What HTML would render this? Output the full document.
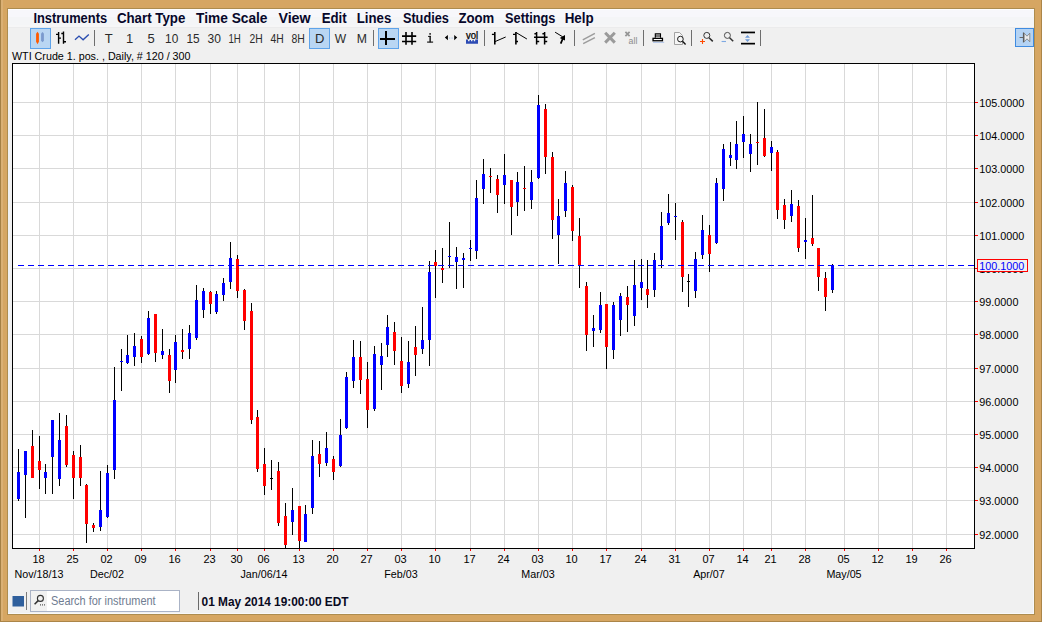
<!DOCTYPE html>
<html><head><meta charset="utf-8"><title>WTI Crude chart</title>
<style>html,body{margin:0;padding:0;background:#d6a662;}body{width:1042px;height:622px;overflow:hidden;font-family:"Liberation Sans",sans-serif;}svg{display:block}text{font-family:"Liberation Sans",sans-serif}</style>
</head><body>
<svg width="1042" height="622" viewBox="0 0 1042 622">
<rect x="0" y="0" width="1042" height="622" fill="#d6a662"/>
<g shape-rendering="crispEdges"><rect x="0" y="0" width="1" height="622" fill="#a58044"/><rect x="1" y="0" width="2" height="622" fill="#dab074"/><rect x="1041" y="0" width="1" height="622" fill="#ab8548"/><rect x="0" y="621" width="1042" height="1" fill="#ab8548"/><rect x="7" y="8" width="1028" height="607" fill="#ad8c4e"/></g>
<rect x="8" y="9" width="1026" height="605" fill="#f0f0f0"/>
<defs><linearGradient id="mb" x1="0" y1="0" x2="0" y2="1"><stop offset="0" stop-color="#fafbfc"/><stop offset="0.8" stop-color="#f4f5f7"/><stop offset="1" stop-color="#eeeeef"/></linearGradient></defs>
<g shape-rendering="crispEdges"><rect x="8" y="9" width="1026" height="1" fill="#ffffff"/><rect x="8" y="10" width="1026" height="7" fill="#f7f7fb"/><rect x="8" y="17" width="1026" height="8" fill="#f4f5f7"/><rect x="8" y="25" width="1026" height="2" fill="#f6f6f7"/><rect x="8" y="27" width="1026" height="1" fill="#ebebec"/><rect x="1033" y="28" width="1" height="586" fill="#f8f8fa"/><rect x="8" y="613" width="1026" height="1" fill="#f8f8fa"/></g>
<g font-size="14" font-weight="bold" fill="#07072a">
<text x="33.4" y="23" textLength="73.7" lengthAdjust="spacingAndGlyphs">Instruments</text>
<text x="116.9" y="23" textLength="68.5" lengthAdjust="spacingAndGlyphs">Chart Type</text>
<text x="196.1" y="23" textLength="71.4" lengthAdjust="spacingAndGlyphs">Time Scale</text>
<text x="278.4" y="23" textLength="32.2" lengthAdjust="spacingAndGlyphs">View</text>
<text x="321.7" y="23" textLength="25.0" lengthAdjust="spacingAndGlyphs">Edit</text>
<text x="356.8" y="23" textLength="34.5" lengthAdjust="spacingAndGlyphs">Lines</text>
<text x="402.9" y="23" textLength="46.0" lengthAdjust="spacingAndGlyphs">Studies</text>
<text x="458.4" y="23" textLength="35.7" lengthAdjust="spacingAndGlyphs">Zoom</text>
<text x="505.1" y="23" textLength="50.3" lengthAdjust="spacingAndGlyphs">Settings</text>
<text x="564.7" y="23" textLength="29.0" lengthAdjust="spacingAndGlyphs">Help</text>
</g>
<rect x="30.5" y="28.5" width="20" height="20" fill="#b9d6f3" stroke="#5ea3ea" stroke-width="1" shape-rendering="crispEdges"/>
<rect x="309.5" y="28.5" width="20" height="20" fill="#b9d6f3" stroke="#5ea3ea" stroke-width="1" shape-rendering="crispEdges"/>
<rect x="378.5" y="28.5" width="20" height="20" fill="#b9d6f3" stroke="#5ea3ea" stroke-width="1" shape-rendering="crispEdges"/>
<rect x="1015.5" y="28.5" width="18" height="18" fill="#b4d3f4" stroke="#3f8be0" stroke-width="1" shape-rendering="crispEdges"/>
<path d="M37.5 31.8 L38.9 33.8 L38.9 41.8 L37.5 44.2 L36.1 41.8 L36.1 33.8 Z" fill="#ff5a00"/>
<path d="M42.5 32 L43.9 33.4 L43.9 40.8 L42.5 42.2 L41.1 40.8 L41.1 33.4 Z" fill="#7b9ace"/>
<g stroke="#000" stroke-width="1.4" fill="none"><path d="M58.6 31.9V43.8M56 34.4H58.6M58.6 38.1H61M63.5 31.4V43.8M61.3 33.5H63.5M63.5 41.8H66"/></g>
<path d="M75 39.8 L79 36.1 L83.1 39.8 L88.8 34.4" stroke="#2a4db0" stroke-width="1.4" fill="none"/>
<rect x="94" y="30" width="1" height="16" fill="#6e6e6e" shape-rendering="crispEdges"/>
<rect x="373" y="30" width="1" height="16" fill="#6e6e6e" shape-rendering="crispEdges"/>
<rect x="484" y="30" width="1" height="16" fill="#6e6e6e" shape-rendering="crispEdges"/>
<rect x="574" y="30" width="1" height="16" fill="#6e6e6e" shape-rendering="crispEdges"/>
<rect x="643" y="30" width="1" height="16" fill="#6e6e6e" shape-rendering="crispEdges"/>
<rect x="691" y="30" width="1" height="16" fill="#6e6e6e" shape-rendering="crispEdges"/>
<rect x="760" y="30" width="1" height="16" fill="#6e6e6e" shape-rendering="crispEdges"/>
<g font-size="13" fill="#2a2a2a" text-anchor="middle">
<text x="108.7" y="42.5">T</text>
<text x="129.6" y="42.5">1</text>
<text x="151.2" y="42.5">5</text>
<text x="171.7" y="42.5" textLength="13.2" lengthAdjust="spacingAndGlyphs">10</text>
<text x="193.0" y="42.5" textLength="13.2" lengthAdjust="spacingAndGlyphs">15</text>
<text x="214.2" y="42.5" textLength="13.4" lengthAdjust="spacingAndGlyphs">30</text>
<text x="234.6" y="42.5" textLength="12.4" lengthAdjust="spacingAndGlyphs">1H</text>
<text x="256.2" y="42.5" textLength="13.2" lengthAdjust="spacingAndGlyphs">2H</text>
<text x="277.0" y="42.5" textLength="13.2" lengthAdjust="spacingAndGlyphs">4H</text>
<text x="298.1" y="42.5" textLength="13.4" lengthAdjust="spacingAndGlyphs">8H</text>
<text x="319.7" y="42.5">D</text>
<text x="340.4" y="42.5" textLength="11.4" lengthAdjust="spacingAndGlyphs">W</text>
<text x="361.9" y="42.5" textLength="10.2" lengthAdjust="spacingAndGlyphs">M</text>
</g>
<g fill="#000" shape-rendering="crispEdges"><rect x="385" y="31" width="2" height="14"/><rect x="380" y="38" width="15" height="2"/></g>
<g stroke="#000" stroke-width="1.6" fill="none"><path d="M406 32V44.7M412 32V44.7M402 36.1H416.2M402 41.5H416.2"/></g>
<g fill="#1c1c1c"><rect x="429.3" y="33.1" width="1.6" height="1.6"/><rect x="428.1" y="35.9" width="2.8" height="1.1"/><rect x="429.4" y="35.9" width="1.5" height="6.4"/><rect x="427.1" y="41.5" width="6" height="1.2"/></g>
<path d="M444.8 37.6 L447.9 35 L447.9 40.2 Z M457.2 37.6 L454.2 35 L454.2 40.2 Z" fill="#000"/>
<g fill="#a9c4ea"><rect x="449.2" y="37.4" width="1" height="1.4"/><rect x="451.6" y="37.4" width="1" height="1.4"/></g>
<text x="466" y="38.8" font-size="10" fill="#000" stroke="#000" stroke-width="0.25" textLength="12.2" lengthAdjust="spacingAndGlyphs">vol</text>
<path d="M466 43.8V39.6H468V41.2H469.6V39.9H471V41.2H472.4V39.9H473.8V41.2H475.2V39.6H478V43.8Z" fill="#2c4bb4"/>
<g stroke="#000" fill="none"><path d="M494.8 32V44.6" stroke-width="1.6"/><path d="M491.9 34.4H494.8" stroke-width="1.3"/><path d="M495 41.6L505.7 37" stroke-width="1"/></g>
<g stroke="#000" fill="none"><path d="M515.9 32V44.6" stroke-width="1.6"/><path d="M513 34.4H515.9M515.9 41.5H518" stroke-width="1.3"/><path d="M516 32.5L526.9 39" stroke-width="1"/></g>
<g stroke="#000" stroke-width="1.5" fill="none"><path d="M536.6 32V44.6M544.6 32V44.6M534 37.2H547.6M536.6 41.5H539.2M544.6 41.5H547.2M534.4 33.8H536.6M542.4 33.8H544.6"/></g>
<path d="M555.1 32.2L562.7 36.8" stroke="#000" stroke-width="1" fill="none"/><path d="M565 35L565 40.6L563.3 39.7L561.5 43.9L559.9 43.2L561.7 39L559.8 38Z" fill="#000"/>
<g stroke="#9c9c9c" stroke-width="1.5" fill="none"><path d="M582.8 39.8L594.9 33.3M583.2 43.7L594.9 37.7"/></g>
<path d="M605.2 32.8L614.8 42.6M614.8 32.8L605.2 42.6" stroke="#9a9a9a" stroke-width="3" fill="none"/>
<path d="M625.4 31.9L629.6 36.2M629.6 31.9L625.4 36.2" stroke="#949494" stroke-width="1.7" fill="none"/>
<text x="628.6" y="43.6" font-size="9" fill="#8c8c8c" textLength="8.8" lengthAdjust="spacingAndGlyphs">all</text>
<g><rect x="653.05" y="38.35" width="9.4" height="2.4" fill="#ffffff" stroke="#000" stroke-width="1.3"/><path d="M655.3 37.8V33.9H660.5V37.8M655.3 36H660.5" fill="none" stroke="#000" stroke-width="1.1"/><rect x="653" y="41.9" width="11.2" height="0.9" fill="#a9bfe6"/></g>
<g fill="none"><path d="M674.5 32.5H679.5L682.5 35.5V44.5H674.5Z" stroke="#9a9a9a" stroke-width="0.9" fill="#f6f6f6"/><circle cx="680.4" cy="39.1" r="2.85" stroke="#111" stroke-width="0.95" fill="#f6f6f6"/><path d="M682.5 41.3L685.6 44.6" stroke="#111" stroke-width="1.4"/></g>
<g fill="none"><circle cx="706.8" cy="35.4" r="3" stroke="#2a2a2a" stroke-width="0.95"/><path d="M709 37.7L712.8 41.4" stroke="#2a2a2a" stroke-width="1.5"/><path d="M700 41.5H705M702.5 39V44" stroke="#ff4a00" stroke-width="1.1"/></g>
<g fill="none"><circle cx="727.4" cy="35.4" r="3" stroke="#444" stroke-width="0.95"/><path d="M729.6 37.7L733.2 41.3" stroke="#333" stroke-width="1.5"/><path d="M721.6 41.5H726" stroke="#7ea9e2" stroke-width="1.1"/></g>
<g><rect x="741" y="31.6" width="14" height="1.7" fill="#000"/><rect x="741" y="42.8" width="14" height="1.7" fill="#000"/><path d="M747.5 35L750 37.7H745Z M747.5 42L750 39.3H745Z" fill="#6f9bd8"/></g>
<g><path d="M1019.6 37.5H1023" stroke="#666" stroke-width="1"/><path d="M1023.5 32.5V42.4" stroke="#555" stroke-width="1.2"/><path d="M1024.2 33.2L1027 36.2L1029.8 33.2V41.8L1027 38.8L1024.2 41.8Z" fill="#ececec" stroke="#7a7a7a" stroke-width="0.8"/></g>
<g shape-rendering="crispEdges">
<rect x="12" y="63" width="963" height="486" fill="#ffffff"/>
<rect x="39" y="64" width="1" height="484" fill="#d9d9d9"/>
<rect x="73" y="64" width="1" height="484" fill="#d9d9d9"/>
<rect x="107" y="64" width="1" height="484" fill="#d9d9d9"/>
<rect x="141" y="64" width="1" height="484" fill="#d9d9d9"/>
<rect x="175" y="64" width="1" height="484" fill="#d9d9d9"/>
<rect x="210" y="64" width="1" height="484" fill="#d9d9d9"/>
<rect x="237" y="64" width="1" height="484" fill="#d9d9d9"/>
<rect x="264" y="64" width="1" height="484" fill="#d9d9d9"/>
<rect x="299" y="64" width="1" height="484" fill="#d9d9d9"/>
<rect x="333" y="64" width="1" height="484" fill="#d9d9d9"/>
<rect x="367" y="64" width="1" height="484" fill="#d9d9d9"/>
<rect x="401" y="64" width="1" height="484" fill="#d9d9d9"/>
<rect x="435" y="64" width="1" height="484" fill="#d9d9d9"/>
<rect x="470" y="64" width="1" height="484" fill="#d9d9d9"/>
<rect x="504" y="64" width="1" height="484" fill="#d9d9d9"/>
<rect x="538" y="64" width="1" height="484" fill="#d9d9d9"/>
<rect x="572" y="64" width="1" height="484" fill="#d9d9d9"/>
<rect x="606" y="64" width="1" height="484" fill="#d9d9d9"/>
<rect x="641" y="64" width="1" height="484" fill="#d9d9d9"/>
<rect x="675" y="64" width="1" height="484" fill="#d9d9d9"/>
<rect x="709" y="64" width="1" height="484" fill="#d9d9d9"/>
<rect x="743" y="64" width="1" height="484" fill="#d9d9d9"/>
<rect x="771" y="64" width="1" height="484" fill="#d9d9d9"/>
<rect x="805" y="64" width="1" height="484" fill="#d9d9d9"/>
<rect x="844" y="64" width="1" height="484" fill="#d9d9d9"/>
<rect x="878" y="64" width="1" height="484" fill="#d9d9d9"/>
<rect x="912" y="64" width="1" height="484" fill="#d9d9d9"/>
<rect x="946" y="64" width="1" height="484" fill="#d9d9d9"/>
<rect x="13" y="102" width="961" height="1" fill="#d9d9d9"/>
<rect x="13" y="135" width="961" height="1" fill="#d9d9d9"/>
<rect x="13" y="168" width="961" height="1" fill="#d9d9d9"/>
<rect x="13" y="202" width="961" height="1" fill="#d9d9d9"/>
<rect x="13" y="235" width="961" height="1" fill="#d9d9d9"/>
<rect x="13" y="268" width="961" height="1" fill="#d9d9d9"/>
<rect x="13" y="301" width="961" height="1" fill="#d9d9d9"/>
<rect x="13" y="334" width="961" height="1" fill="#d9d9d9"/>
<rect x="13" y="368" width="961" height="1" fill="#d9d9d9"/>
<rect x="13" y="401" width="961" height="1" fill="#d9d9d9"/>
<rect x="13" y="434" width="961" height="1" fill="#d9d9d9"/>
<rect x="13" y="467" width="961" height="1" fill="#d9d9d9"/>
<rect x="13" y="500" width="961" height="1" fill="#d9d9d9"/>
<rect x="13" y="534" width="961" height="1" fill="#d9d9d9"/>
<rect x="18" y="449" width="1" height="52" fill="#000"/>
<rect x="17" y="472" width="3" height="27" fill="#0000ff"/>
<rect x="25" y="451" width="1" height="67" fill="#000"/>
<rect x="24" y="451" width="3" height="24" fill="#0000ff"/>
<rect x="32" y="430" width="1" height="48" fill="#000"/>
<rect x="31" y="446" width="3" height="32" fill="#ff0000"/>
<rect x="39" y="436" width="1" height="53" fill="#000"/>
<rect x="38" y="461" width="3" height="9" fill="#ff0000"/>
<rect x="45" y="464" width="1" height="30" fill="#000"/>
<rect x="44" y="472" width="3" height="6" fill="#0000ff"/>
<rect x="52" y="420" width="1" height="74" fill="#000"/>
<rect x="51" y="420" width="3" height="37" fill="#0000ff"/>
<rect x="59" y="413" width="1" height="73" fill="#000"/>
<rect x="58" y="440" width="3" height="39" fill="#0000ff"/>
<rect x="66" y="415" width="1" height="52" fill="#000"/>
<rect x="65" y="426" width="3" height="39" fill="#ff0000"/>
<rect x="73" y="451" width="1" height="48" fill="#000"/>
<rect x="72" y="455" width="3" height="23" fill="#ff0000"/>
<rect x="80" y="445" width="1" height="41" fill="#000"/>
<rect x="79" y="457" width="3" height="21" fill="#ff0000"/>
<rect x="86" y="484" width="1" height="59" fill="#000"/>
<rect x="85" y="485" width="3" height="39" fill="#ff0000"/>
<rect x="93" y="523" width="1" height="9" fill="#000"/>
<rect x="92" y="525" width="3" height="3" fill="#ff0000"/>
<rect x="100" y="471" width="1" height="60" fill="#000"/>
<rect x="99" y="510" width="3" height="17" fill="#0000ff"/>
<rect x="107" y="465" width="1" height="53" fill="#000"/>
<rect x="106" y="473" width="3" height="44" fill="#0000ff"/>
<rect x="114" y="367" width="1" height="112" fill="#000"/>
<rect x="113" y="400" width="3" height="70" fill="#0000ff"/>
<rect x="121" y="349" width="1" height="42" fill="#000"/>
<rect x="120" y="361" width="3" height="1" fill="#0000ff"/>
<rect x="127" y="335" width="1" height="29" fill="#000"/>
<rect x="126" y="355" width="3" height="8" fill="#0000ff"/>
<rect x="134" y="333" width="1" height="33" fill="#000"/>
<rect x="133" y="346" width="3" height="11" fill="#0000ff"/>
<rect x="141" y="336" width="1" height="27" fill="#000"/>
<rect x="140" y="339" width="3" height="18" fill="#ff0000"/>
<rect x="148" y="311" width="1" height="44" fill="#000"/>
<rect x="147" y="318" width="3" height="36" fill="#0000ff"/>
<rect x="155" y="314" width="1" height="48" fill="#000"/>
<rect x="154" y="314" width="3" height="39" fill="#ff0000"/>
<rect x="162" y="329" width="1" height="30" fill="#000"/>
<rect x="161" y="351" width="3" height="4" fill="#0000ff"/>
<rect x="169" y="349" width="1" height="44" fill="#000"/>
<rect x="168" y="355" width="3" height="26" fill="#ff0000"/>
<rect x="175" y="335" width="1" height="48" fill="#000"/>
<rect x="174" y="342" width="3" height="28" fill="#0000ff"/>
<rect x="182" y="329" width="1" height="30" fill="#000"/>
<rect x="181" y="350" width="3" height="2" fill="#ff0000"/>
<rect x="189" y="325" width="1" height="34" fill="#000"/>
<rect x="188" y="333" width="3" height="16" fill="#0000ff"/>
<rect x="196" y="285" width="1" height="55" fill="#000"/>
<rect x="195" y="300" width="3" height="38" fill="#0000ff"/>
<rect x="203" y="288" width="1" height="30" fill="#000"/>
<rect x="202" y="291" width="3" height="19" fill="#0000ff"/>
<rect x="210" y="291" width="1" height="23" fill="#000"/>
<rect x="209" y="292" width="3" height="12" fill="#ff0000"/>
<rect x="216" y="291" width="1" height="23" fill="#000"/>
<rect x="215" y="294" width="3" height="18" fill="#0000ff"/>
<rect x="223" y="278" width="1" height="23" fill="#000"/>
<rect x="222" y="283" width="3" height="12" fill="#0000ff"/>
<rect x="230" y="242" width="1" height="47" fill="#000"/>
<rect x="229" y="258" width="3" height="24" fill="#0000ff"/>
<rect x="237" y="255" width="1" height="43" fill="#000"/>
<rect x="236" y="259" width="3" height="32" fill="#ff0000"/>
<rect x="244" y="289" width="1" height="41" fill="#000"/>
<rect x="243" y="290" width="3" height="31" fill="#ff0000"/>
<rect x="251" y="303" width="1" height="121" fill="#000"/>
<rect x="250" y="311" width="3" height="109" fill="#ff0000"/>
<rect x="257" y="410" width="1" height="62" fill="#000"/>
<rect x="256" y="417" width="3" height="52" fill="#ff0000"/>
<rect x="264" y="448" width="1" height="47" fill="#000"/>
<rect x="263" y="464" width="3" height="22" fill="#ff0000"/>
<rect x="271" y="460" width="1" height="30" fill="#000"/>
<rect x="270" y="478" width="3" height="1" fill="#000000"/>
<rect x="278" y="462" width="1" height="64" fill="#000"/>
<rect x="277" y="471" width="3" height="52" fill="#ff0000"/>
<rect x="285" y="503" width="1" height="45" fill="#000"/>
<rect x="284" y="516" width="3" height="29" fill="#ff0000"/>
<rect x="292" y="488" width="1" height="47" fill="#000"/>
<rect x="291" y="510" width="3" height="12" fill="#0000ff"/>
<rect x="299" y="506" width="1" height="42" fill="#000"/>
<rect x="298" y="506" width="3" height="35" fill="#ff0000"/>
<rect x="305" y="505" width="1" height="37" fill="#000"/>
<rect x="304" y="514" width="3" height="28" fill="#0000ff"/>
<rect x="312" y="440" width="1" height="74" fill="#000"/>
<rect x="311" y="456" width="3" height="52" fill="#0000ff"/>
<rect x="319" y="441" width="1" height="36" fill="#000"/>
<rect x="318" y="454" width="3" height="10" fill="#ff0000"/>
<rect x="326" y="432" width="1" height="34" fill="#000"/>
<rect x="325" y="448" width="3" height="15" fill="#0000ff"/>
<rect x="333" y="456" width="1" height="24" fill="#000"/>
<rect x="332" y="459" width="3" height="13" fill="#ff0000"/>
<rect x="340" y="419" width="1" height="48" fill="#000"/>
<rect x="339" y="435" width="3" height="31" fill="#0000ff"/>
<rect x="346" y="372" width="1" height="57" fill="#000"/>
<rect x="345" y="377" width="3" height="51" fill="#0000ff"/>
<rect x="353" y="340" width="1" height="48" fill="#000"/>
<rect x="352" y="357" width="3" height="24" fill="#0000ff"/>
<rect x="360" y="341" width="1" height="53" fill="#000"/>
<rect x="359" y="357" width="3" height="23" fill="#ff0000"/>
<rect x="367" y="362" width="1" height="66" fill="#000"/>
<rect x="366" y="379" width="3" height="31" fill="#ff0000"/>
<rect x="374" y="346" width="1" height="65" fill="#000"/>
<rect x="373" y="354" width="3" height="55" fill="#0000ff"/>
<rect x="381" y="343" width="1" height="47" fill="#000"/>
<rect x="380" y="356" width="3" height="9" fill="#0000ff"/>
<rect x="387" y="315" width="1" height="42" fill="#000"/>
<rect x="386" y="327" width="3" height="18" fill="#0000ff"/>
<rect x="394" y="322" width="1" height="43" fill="#000"/>
<rect x="393" y="332" width="3" height="19" fill="#ff0000"/>
<rect x="401" y="337" width="1" height="56" fill="#000"/>
<rect x="400" y="361" width="3" height="25" fill="#ff0000"/>
<rect x="408" y="341" width="1" height="47" fill="#000"/>
<rect x="407" y="362" width="3" height="22" fill="#0000ff"/>
<rect x="415" y="326" width="1" height="50" fill="#000"/>
<rect x="414" y="347" width="3" height="8" fill="#ff0000"/>
<rect x="422" y="307" width="1" height="47" fill="#000"/>
<rect x="421" y="340" width="3" height="9" fill="#0000ff"/>
<rect x="429" y="261" width="1" height="105" fill="#000"/>
<rect x="428" y="272" width="3" height="68" fill="#0000ff"/>
<rect x="435" y="250" width="1" height="48" fill="#000"/>
<rect x="434" y="262" width="3" height="4" fill="#ff0000"/>
<rect x="442" y="248" width="1" height="35" fill="#000"/>
<rect x="441" y="268" width="3" height="2" fill="#ff0000"/>
<rect x="449" y="222" width="1" height="46" fill="#000"/>
<rect x="448" y="256" width="3" height="1" fill="#0000ff"/>
<rect x="456" y="247" width="1" height="42" fill="#000"/>
<rect x="455" y="257" width="3" height="5" fill="#0000ff"/>
<rect x="463" y="253" width="1" height="35" fill="#000"/>
<rect x="462" y="258" width="3" height="2" fill="#0000ff"/>
<rect x="470" y="240" width="1" height="21" fill="#000"/>
<rect x="469" y="248" width="3" height="1" fill="#0000ff"/>
<rect x="476" y="180" width="1" height="79" fill="#000"/>
<rect x="475" y="198" width="3" height="53" fill="#0000ff"/>
<rect x="483" y="159" width="1" height="45" fill="#000"/>
<rect x="482" y="174" width="3" height="15" fill="#0000ff"/>
<rect x="490" y="168" width="1" height="25" fill="#000"/>
<rect x="489" y="176" width="3" height="1" fill="#ff0000"/>
<rect x="497" y="175" width="1" height="38" fill="#000"/>
<rect x="496" y="179" width="3" height="16" fill="#ff0000"/>
<rect x="504" y="154" width="1" height="50" fill="#000"/>
<rect x="503" y="175" width="3" height="10" fill="#0000ff"/>
<rect x="511" y="180" width="1" height="55" fill="#000"/>
<rect x="510" y="180" width="3" height="27" fill="#ff0000"/>
<rect x="517" y="172" width="1" height="44" fill="#000"/>
<rect x="516" y="182" width="3" height="20" fill="#0000ff"/>
<rect x="524" y="166" width="1" height="45" fill="#000"/>
<rect x="523" y="188" width="3" height="1" fill="#ff0000"/>
<rect x="531" y="170" width="1" height="39" fill="#000"/>
<rect x="530" y="182" width="3" height="18" fill="#0000ff"/>
<rect x="538" y="95" width="1" height="84" fill="#000"/>
<rect x="537" y="105" width="3" height="73" fill="#0000ff"/>
<rect x="545" y="104" width="1" height="70" fill="#000"/>
<rect x="544" y="109" width="3" height="48" fill="#ff0000"/>
<rect x="552" y="152" width="1" height="87" fill="#000"/>
<rect x="551" y="157" width="3" height="63" fill="#ff0000"/>
<rect x="558" y="199" width="1" height="65" fill="#000"/>
<rect x="557" y="216" width="3" height="19" fill="#0000ff"/>
<rect x="565" y="171" width="1" height="46" fill="#000"/>
<rect x="564" y="183" width="3" height="28" fill="#0000ff"/>
<rect x="572" y="185" width="1" height="56" fill="#000"/>
<rect x="571" y="187" width="3" height="44" fill="#ff0000"/>
<rect x="579" y="218" width="1" height="70" fill="#000"/>
<rect x="578" y="236" width="3" height="30" fill="#ff0000"/>
<rect x="586" y="282" width="1" height="69" fill="#000"/>
<rect x="585" y="286" width="3" height="49" fill="#ff0000"/>
<rect x="593" y="315" width="1" height="32" fill="#000"/>
<rect x="592" y="328" width="3" height="3" fill="#0000ff"/>
<rect x="600" y="292" width="1" height="41" fill="#000"/>
<rect x="599" y="305" width="3" height="25" fill="#0000ff"/>
<rect x="606" y="304" width="1" height="65" fill="#000"/>
<rect x="605" y="304" width="3" height="43" fill="#ff0000"/>
<rect x="613" y="302" width="1" height="57" fill="#000"/>
<rect x="612" y="305" width="3" height="45" fill="#0000ff"/>
<rect x="620" y="293" width="1" height="43" fill="#000"/>
<rect x="619" y="296" width="3" height="24" fill="#0000ff"/>
<rect x="627" y="286" width="1" height="46" fill="#000"/>
<rect x="626" y="297" width="3" height="8" fill="#ff0000"/>
<rect x="634" y="260" width="1" height="66" fill="#000"/>
<rect x="633" y="285" width="3" height="31" fill="#0000ff"/>
<rect x="641" y="259" width="1" height="41" fill="#000"/>
<rect x="640" y="282" width="3" height="6" fill="#0000ff"/>
<rect x="647" y="260" width="1" height="48" fill="#000"/>
<rect x="646" y="289" width="3" height="6" fill="#ff0000"/>
<rect x="654" y="253" width="1" height="44" fill="#000"/>
<rect x="653" y="260" width="3" height="30" fill="#0000ff"/>
<rect x="661" y="212" width="1" height="56" fill="#000"/>
<rect x="660" y="226" width="3" height="34" fill="#0000ff"/>
<rect x="668" y="194" width="1" height="31" fill="#000"/>
<rect x="667" y="213" width="3" height="10" fill="#0000ff"/>
<rect x="675" y="203" width="1" height="37" fill="#000"/>
<rect x="674" y="216" width="3" height="1" fill="#0000ff"/>
<rect x="682" y="220" width="1" height="72" fill="#000"/>
<rect x="681" y="222" width="3" height="55" fill="#ff0000"/>
<rect x="688" y="274" width="1" height="33" fill="#000"/>
<rect x="687" y="281" width="3" height="1" fill="#000000"/>
<rect x="695" y="252" width="1" height="46" fill="#000"/>
<rect x="694" y="259" width="3" height="32" fill="#0000ff"/>
<rect x="702" y="215" width="1" height="44" fill="#000"/>
<rect x="701" y="230" width="3" height="25" fill="#0000ff"/>
<rect x="709" y="225" width="1" height="47" fill="#000"/>
<rect x="708" y="235" width="3" height="19" fill="#ff0000"/>
<rect x="716" y="178" width="1" height="66" fill="#000"/>
<rect x="715" y="183" width="3" height="60" fill="#0000ff"/>
<rect x="723" y="144" width="1" height="57" fill="#000"/>
<rect x="722" y="149" width="3" height="40" fill="#0000ff"/>
<rect x="730" y="142" width="1" height="24" fill="#000"/>
<rect x="729" y="155" width="3" height="3" fill="#0000ff"/>
<rect x="736" y="121" width="1" height="48" fill="#000"/>
<rect x="735" y="144" width="3" height="16" fill="#0000ff"/>
<rect x="743" y="116" width="1" height="42" fill="#000"/>
<rect x="742" y="134" width="3" height="8" fill="#0000ff"/>
<rect x="750" y="134" width="1" height="38" fill="#000"/>
<rect x="749" y="144" width="3" height="10" fill="#0000ff"/>
<rect x="757" y="102" width="1" height="63" fill="#000"/>
<rect x="756" y="142" width="3" height="1" fill="#ff0000"/>
<rect x="764" y="109" width="1" height="48" fill="#000"/>
<rect x="763" y="138" width="3" height="18" fill="#ff0000"/>
<rect x="771" y="141" width="1" height="30" fill="#000"/>
<rect x="770" y="147" width="3" height="6" fill="#0000ff"/>
<rect x="777" y="150" width="1" height="69" fill="#000"/>
<rect x="776" y="152" width="3" height="58" fill="#ff0000"/>
<rect x="784" y="199" width="1" height="30" fill="#000"/>
<rect x="783" y="205" width="3" height="15" fill="#ff0000"/>
<rect x="791" y="190" width="1" height="32" fill="#000"/>
<rect x="790" y="204" width="3" height="12" fill="#0000ff"/>
<rect x="798" y="200" width="1" height="52" fill="#000"/>
<rect x="797" y="206" width="3" height="42" fill="#ff0000"/>
<rect x="805" y="218" width="1" height="41" fill="#000"/>
<rect x="804" y="240" width="3" height="2" fill="#0000ff"/>
<rect x="812" y="195" width="1" height="51" fill="#000"/>
<rect x="811" y="238" width="3" height="6" fill="#ff0000"/>
<rect x="818" y="248" width="1" height="43" fill="#000"/>
<rect x="817" y="248" width="3" height="29" fill="#ff0000"/>
<rect x="825" y="272" width="1" height="39" fill="#000"/>
<rect x="824" y="278" width="3" height="19" fill="#ff0000"/>
<rect x="832" y="264" width="1" height="29" fill="#000"/>
<rect x="831" y="265" width="3" height="25" fill="#0000ff"/>
<rect x="18" y="265" width="6" height="1" fill="#0000ff"/>
<rect x="28" y="265" width="6" height="1" fill="#0000ff"/>
<rect x="38" y="265" width="6" height="1" fill="#0000ff"/>
<rect x="48" y="265" width="6" height="1" fill="#0000ff"/>
<rect x="58" y="265" width="6" height="1" fill="#0000ff"/>
<rect x="68" y="265" width="6" height="1" fill="#0000ff"/>
<rect x="78" y="265" width="6" height="1" fill="#0000ff"/>
<rect x="88" y="265" width="6" height="1" fill="#0000ff"/>
<rect x="98" y="265" width="6" height="1" fill="#0000ff"/>
<rect x="108" y="265" width="6" height="1" fill="#0000ff"/>
<rect x="118" y="265" width="6" height="1" fill="#0000ff"/>
<rect x="128" y="265" width="6" height="1" fill="#0000ff"/>
<rect x="138" y="265" width="6" height="1" fill="#0000ff"/>
<rect x="148" y="265" width="6" height="1" fill="#0000ff"/>
<rect x="158" y="265" width="6" height="1" fill="#0000ff"/>
<rect x="168" y="265" width="6" height="1" fill="#0000ff"/>
<rect x="178" y="265" width="6" height="1" fill="#0000ff"/>
<rect x="188" y="265" width="6" height="1" fill="#0000ff"/>
<rect x="198" y="265" width="6" height="1" fill="#0000ff"/>
<rect x="208" y="265" width="6" height="1" fill="#0000ff"/>
<rect x="218" y="265" width="6" height="1" fill="#0000ff"/>
<rect x="228" y="265" width="6" height="1" fill="#0000ff"/>
<rect x="238" y="265" width="6" height="1" fill="#0000ff"/>
<rect x="248" y="265" width="6" height="1" fill="#0000ff"/>
<rect x="258" y="265" width="6" height="1" fill="#0000ff"/>
<rect x="268" y="265" width="6" height="1" fill="#0000ff"/>
<rect x="278" y="265" width="6" height="1" fill="#0000ff"/>
<rect x="288" y="265" width="6" height="1" fill="#0000ff"/>
<rect x="298" y="265" width="6" height="1" fill="#0000ff"/>
<rect x="308" y="265" width="6" height="1" fill="#0000ff"/>
<rect x="318" y="265" width="6" height="1" fill="#0000ff"/>
<rect x="328" y="265" width="6" height="1" fill="#0000ff"/>
<rect x="338" y="265" width="6" height="1" fill="#0000ff"/>
<rect x="348" y="265" width="6" height="1" fill="#0000ff"/>
<rect x="358" y="265" width="6" height="1" fill="#0000ff"/>
<rect x="368" y="265" width="6" height="1" fill="#0000ff"/>
<rect x="378" y="265" width="6" height="1" fill="#0000ff"/>
<rect x="388" y="265" width="6" height="1" fill="#0000ff"/>
<rect x="398" y="265" width="6" height="1" fill="#0000ff"/>
<rect x="408" y="265" width="6" height="1" fill="#0000ff"/>
<rect x="418" y="265" width="6" height="1" fill="#0000ff"/>
<rect x="428" y="265" width="6" height="1" fill="#0000ff"/>
<rect x="438" y="265" width="6" height="1" fill="#0000ff"/>
<rect x="448" y="265" width="6" height="1" fill="#0000ff"/>
<rect x="458" y="265" width="6" height="1" fill="#0000ff"/>
<rect x="468" y="265" width="6" height="1" fill="#0000ff"/>
<rect x="478" y="265" width="6" height="1" fill="#0000ff"/>
<rect x="488" y="265" width="6" height="1" fill="#0000ff"/>
<rect x="498" y="265" width="6" height="1" fill="#0000ff"/>
<rect x="508" y="265" width="6" height="1" fill="#0000ff"/>
<rect x="518" y="265" width="6" height="1" fill="#0000ff"/>
<rect x="528" y="265" width="6" height="1" fill="#0000ff"/>
<rect x="538" y="265" width="6" height="1" fill="#0000ff"/>
<rect x="548" y="265" width="6" height="1" fill="#0000ff"/>
<rect x="558" y="265" width="6" height="1" fill="#0000ff"/>
<rect x="568" y="265" width="6" height="1" fill="#0000ff"/>
<rect x="578" y="265" width="6" height="1" fill="#0000ff"/>
<rect x="588" y="265" width="6" height="1" fill="#0000ff"/>
<rect x="598" y="265" width="6" height="1" fill="#0000ff"/>
<rect x="608" y="265" width="6" height="1" fill="#0000ff"/>
<rect x="618" y="265" width="6" height="1" fill="#0000ff"/>
<rect x="628" y="265" width="6" height="1" fill="#0000ff"/>
<rect x="638" y="265" width="6" height="1" fill="#0000ff"/>
<rect x="648" y="265" width="6" height="1" fill="#0000ff"/>
<rect x="658" y="265" width="6" height="1" fill="#0000ff"/>
<rect x="668" y="265" width="6" height="1" fill="#0000ff"/>
<rect x="678" y="265" width="6" height="1" fill="#0000ff"/>
<rect x="688" y="265" width="6" height="1" fill="#0000ff"/>
<rect x="698" y="265" width="6" height="1" fill="#0000ff"/>
<rect x="708" y="265" width="6" height="1" fill="#0000ff"/>
<rect x="718" y="265" width="6" height="1" fill="#0000ff"/>
<rect x="728" y="265" width="6" height="1" fill="#0000ff"/>
<rect x="738" y="265" width="6" height="1" fill="#0000ff"/>
<rect x="748" y="265" width="6" height="1" fill="#0000ff"/>
<rect x="758" y="265" width="6" height="1" fill="#0000ff"/>
<rect x="768" y="265" width="6" height="1" fill="#0000ff"/>
<rect x="778" y="265" width="6" height="1" fill="#0000ff"/>
<rect x="788" y="265" width="6" height="1" fill="#0000ff"/>
<rect x="798" y="265" width="6" height="1" fill="#0000ff"/>
<rect x="808" y="265" width="6" height="1" fill="#0000ff"/>
<rect x="818" y="265" width="6" height="1" fill="#0000ff"/>
<rect x="828" y="265" width="6" height="1" fill="#0000ff"/>
<rect x="838" y="265" width="6" height="1" fill="#0000ff"/>
<rect x="848" y="265" width="6" height="1" fill="#0000ff"/>
<rect x="858" y="265" width="6" height="1" fill="#0000ff"/>
<rect x="868" y="265" width="6" height="1" fill="#0000ff"/>
<rect x="878" y="265" width="6" height="1" fill="#0000ff"/>
<rect x="888" y="265" width="6" height="1" fill="#0000ff"/>
<rect x="898" y="265" width="6" height="1" fill="#0000ff"/>
<rect x="908" y="265" width="6" height="1" fill="#0000ff"/>
<rect x="918" y="265" width="6" height="1" fill="#0000ff"/>
<rect x="928" y="265" width="6" height="1" fill="#0000ff"/>
<rect x="938" y="265" width="6" height="1" fill="#0000ff"/>
<rect x="948" y="265" width="6" height="1" fill="#0000ff"/>
<rect x="958" y="265" width="6" height="1" fill="#0000ff"/>
<rect x="968" y="265" width="6" height="1" fill="#0000ff"/>
<rect x="12" y="63" width="963" height="1" fill="#000"/>
<rect x="12" y="548" width="963" height="1" fill="#000"/>
<rect x="12" y="63" width="1" height="486" fill="#000"/>
<rect x="974" y="63" width="1" height="486" fill="#000"/>
<rect x="39" y="549" width="1" height="2" fill="#ff0000"/>
<rect x="73" y="549" width="1" height="2" fill="#ff0000"/>
<rect x="107" y="549" width="1" height="2" fill="#ff0000"/>
<rect x="141" y="549" width="1" height="2" fill="#ff0000"/>
<rect x="175" y="549" width="1" height="2" fill="#ff0000"/>
<rect x="210" y="549" width="1" height="2" fill="#ff0000"/>
<rect x="237" y="549" width="1" height="2" fill="#ff0000"/>
<rect x="264" y="549" width="1" height="2" fill="#ff0000"/>
<rect x="299" y="549" width="1" height="2" fill="#ff0000"/>
<rect x="333" y="549" width="1" height="2" fill="#ff0000"/>
<rect x="367" y="549" width="1" height="2" fill="#ff0000"/>
<rect x="401" y="549" width="1" height="2" fill="#ff0000"/>
<rect x="435" y="549" width="1" height="2" fill="#ff0000"/>
<rect x="470" y="549" width="1" height="2" fill="#ff0000"/>
<rect x="504" y="549" width="1" height="2" fill="#ff0000"/>
<rect x="538" y="549" width="1" height="2" fill="#ff0000"/>
<rect x="572" y="549" width="1" height="2" fill="#ff0000"/>
<rect x="606" y="549" width="1" height="2" fill="#ff0000"/>
<rect x="641" y="549" width="1" height="2" fill="#ff0000"/>
<rect x="675" y="549" width="1" height="2" fill="#ff0000"/>
<rect x="709" y="549" width="1" height="2" fill="#ff0000"/>
<rect x="743" y="549" width="1" height="2" fill="#ff0000"/>
<rect x="771" y="549" width="1" height="2" fill="#ff0000"/>
<rect x="805" y="549" width="1" height="2" fill="#ff0000"/>
<rect x="844" y="549" width="1" height="2" fill="#ff0000"/>
<rect x="878" y="549" width="1" height="2" fill="#ff0000"/>
<rect x="912" y="549" width="1" height="2" fill="#ff0000"/>
<rect x="946" y="549" width="1" height="2" fill="#ff0000"/>
<rect x="975" y="102" width="3" height="1" fill="#ff0000"/>
<rect x="975" y="135" width="3" height="1" fill="#ff0000"/>
<rect x="975" y="168" width="3" height="1" fill="#ff0000"/>
<rect x="975" y="202" width="3" height="1" fill="#ff0000"/>
<rect x="975" y="235" width="3" height="1" fill="#ff0000"/>
<rect x="975" y="268" width="3" height="1" fill="#ff0000"/>
<rect x="975" y="301" width="3" height="1" fill="#ff0000"/>
<rect x="975" y="334" width="3" height="1" fill="#ff0000"/>
<rect x="975" y="368" width="3" height="1" fill="#ff0000"/>
<rect x="975" y="401" width="3" height="1" fill="#ff0000"/>
<rect x="975" y="434" width="3" height="1" fill="#ff0000"/>
<rect x="975" y="467" width="3" height="1" fill="#ff0000"/>
<rect x="975" y="500" width="3" height="1" fill="#ff0000"/>
<rect x="975" y="534" width="3" height="1" fill="#ff0000"/>
</g>
<g font-size="11" fill="#000">
<text x="12" y="60" textLength="178.5" lengthAdjust="spacingAndGlyphs">WTI Crude 1. pos. , Daily, # 120 / 300</text>
<text x="38.5" y="563" text-anchor="middle">18</text>
<text x="72.5" y="563" text-anchor="middle">25</text>
<text x="106.5" y="563" text-anchor="middle">02</text>
<text x="140.5" y="563" text-anchor="middle">09</text>
<text x="174.5" y="563" text-anchor="middle">16</text>
<text x="209.5" y="563" text-anchor="middle">23</text>
<text x="236.5" y="563" text-anchor="middle">30</text>
<text x="263.5" y="563" text-anchor="middle">06</text>
<text x="298.5" y="563" text-anchor="middle">13</text>
<text x="332.5" y="563" text-anchor="middle">20</text>
<text x="366.5" y="563" text-anchor="middle">27</text>
<text x="400.5" y="563" text-anchor="middle">03</text>
<text x="434.5" y="563" text-anchor="middle">10</text>
<text x="469.5" y="563" text-anchor="middle">17</text>
<text x="503.5" y="563" text-anchor="middle">24</text>
<text x="537.5" y="563" text-anchor="middle">03</text>
<text x="571.5" y="563" text-anchor="middle">10</text>
<text x="605.5" y="563" text-anchor="middle">17</text>
<text x="640.5" y="563" text-anchor="middle">24</text>
<text x="674.5" y="563" text-anchor="middle">31</text>
<text x="708.5" y="563" text-anchor="middle">07</text>
<text x="742.5" y="563" text-anchor="middle">14</text>
<text x="770.5" y="563" text-anchor="middle">21</text>
<text x="804.5" y="563" text-anchor="middle">28</text>
<text x="843.5" y="563" text-anchor="middle">05</text>
<text x="877.5" y="563" text-anchor="middle">12</text>
<text x="911.5" y="563" text-anchor="middle">19</text>
<text x="945.5" y="563" text-anchor="middle">26</text>
<text x="39" y="578" text-anchor="middle" textLength="48.9" lengthAdjust="spacingAndGlyphs">Nov/18/13</text>
<text x="107" y="578" text-anchor="middle" textLength="34.0" lengthAdjust="spacingAndGlyphs">Dec/02</text>
<text x="264" y="578" text-anchor="middle" textLength="47.1" lengthAdjust="spacingAndGlyphs">Jan/06/14</text>
<text x="401" y="578" text-anchor="middle" textLength="33.4" lengthAdjust="spacingAndGlyphs">Feb/03</text>
<text x="538" y="578" text-anchor="middle" textLength="33.4" lengthAdjust="spacingAndGlyphs">Mar/03</text>
<text x="709" y="578" text-anchor="middle" textLength="31.6" lengthAdjust="spacingAndGlyphs">Apr/07</text>
<text x="844" y="578" text-anchor="middle" textLength="35.2" lengthAdjust="spacingAndGlyphs">May/05</text>
<text x="979.3" y="106.5" textLength="45.1" lengthAdjust="spacingAndGlyphs">105.0000</text>
<text x="979.3" y="139.5" textLength="45.1" lengthAdjust="spacingAndGlyphs">104.0000</text>
<text x="979.3" y="172.5" textLength="45.1" lengthAdjust="spacingAndGlyphs">103.0000</text>
<text x="979.3" y="206.5" textLength="45.1" lengthAdjust="spacingAndGlyphs">102.0000</text>
<text x="979.3" y="239.5" textLength="45.1" lengthAdjust="spacingAndGlyphs">101.0000</text>
<text x="979.3" y="272.5" textLength="45.1" lengthAdjust="spacingAndGlyphs">100.0000</text>
<text x="979.3" y="305.5" textLength="39.1" lengthAdjust="spacingAndGlyphs">99.0000</text>
<text x="979.3" y="338.5" textLength="39.1" lengthAdjust="spacingAndGlyphs">98.0000</text>
<text x="979.3" y="372.5" textLength="39.1" lengthAdjust="spacingAndGlyphs">97.0000</text>
<text x="979.3" y="405.5" textLength="39.1" lengthAdjust="spacingAndGlyphs">96.0000</text>
<text x="979.3" y="438.5" textLength="39.1" lengthAdjust="spacingAndGlyphs">95.0000</text>
<text x="979.3" y="471.5" textLength="39.1" lengthAdjust="spacingAndGlyphs">94.0000</text>
<text x="979.3" y="504.5" textLength="39.1" lengthAdjust="spacingAndGlyphs">93.0000</text>
<text x="979.3" y="538.5" textLength="39.1" lengthAdjust="spacingAndGlyphs">92.0000</text>
</g>
<rect x="977.5" y="259.5" width="50" height="12" fill="#f0f0f0" stroke="#ff0000" stroke-width="1" shape-rendering="crispEdges"/>
<text x="979.3" y="270" font-size="11" fill="#0000ff" textLength="45.1" lengthAdjust="spacingAndGlyphs">100.1000</text>
<rect x="12.5" y="596" width="11.5" height="10.5" fill="#2f5f9c"/>
<rect x="26" y="592" width="1" height="18" fill="#7a7a7a" shape-rendering="crispEdges"/>
<rect x="30.5" y="590.5" width="149" height="21" fill="#ffffff" stroke="#aab3c6" stroke-width="1" shape-rendering="crispEdges"/>
<rect x="31" y="591" width="16" height="20" fill="#f1f1f1" shape-rendering="crispEdges"/>
<g fill="none"><circle cx="40.4" cy="598.4" r="3" stroke="#333" stroke-width="1.1"/><path d="M38.2 600.6L34.6 604.2" stroke="#333" stroke-width="1.5"/></g>
<g fill="#333"><rect x="40" y="604.4" width="1" height="1"/><rect x="42" y="604.4" width="1" height="1"/><rect x="44" y="604.4" width="1" height="1"/></g>
<text x="51" y="605" font-size="12" fill="#6f7c91" textLength="104.6" lengthAdjust="spacingAndGlyphs">Search for instrument</text>
<rect x="198" y="592" width="1" height="18" fill="#6a6a6a" shape-rendering="crispEdges"/>
<text x="201.6" y="606" font-size="12" font-weight="bold" fill="#0a0a1e" textLength="147" lengthAdjust="spacingAndGlyphs">01 May 2014 19:00:00 EDT</text>
</svg></body></html>
